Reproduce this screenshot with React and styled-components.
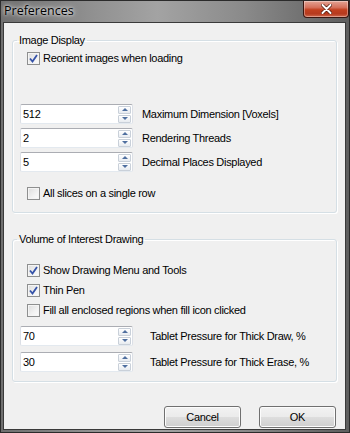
import styled, { createGlobalStyle } from "styled-components";

const GlobalStyle = createGlobalStyle`
    html, body {
        margin: 0;
        padding: 0;
        background: #ffffff;
    }
    * {
        box-sizing: border-box;
    }
`;

const CheckMark = () => (
    <svg width="9" height="9" viewBox="0 0 9 9">
        <path d="M1 4.5 L3.5 7.5 L8 1" fill="none" stroke="#3552a8" strokeWidth="1.8" />
    </svg>
);

const CloseGlyph = () => (
    <svg width="11" height="10" viewBox="0 0 11 10">
        <path d="M1.5 1 L9.5 9 M9.5 1 L1.5 9" stroke="#4a1408" strokeWidth="3.4" strokeLinecap="round" />
        <path d="M1.5 1 L9.5 9 M9.5 1 L1.5 9" stroke="#ffffff" strokeWidth="2" strokeLinecap="round" />
    </svg>
);

const Checkbox = ({ checked, label }) => (
    <CheckRow>
        <Box>{checked && <CheckMark />}</Box>
        <span>{label}</span>
    </CheckRow>
);

const SpinField = ({ value, label, wide }) => (
    <SpinRow wide={wide}>
        <Input>
            <span>{value}</span>
            <Spinner>
                <SpinButton>
                    <Arrow up />
                </SpinButton>
                <SpinButton>
                    <Arrow />
                </SpinButton>
            </Spinner>
        </Input>
        <span>{label}</span>
    </SpinRow>
);

const App = () => {
    return (
        <>
            <GlobalStyle />
            <Window>
                <TitleBar>
                    <Title>Preferences</Title>
                    <CloseButton>
                        <CloseGlyph />
                    </CloseButton>
                </TitleBar>
                <Client>
                    <Group>
                        <Legend>Image Display</Legend>
                        <Section top={4}>
                            <Checkbox checked label="Reorient images when loading" />
                        </Section>
                        <Section top={38} gap={4}>
                            <SpinField value="512" label="Maximum Dimension [Voxels]" />
                            <SpinField value="2" label="Rendering Threads" />
                            <SpinField value="5" label="Decimal Places Displayed" />
                        </Section>
                        <Section top={14} bottom={11}>
                            <Checkbox label="All slices on a single row" />
                        </Section>
                    </Group>
                    <Group second>
                        <Legend>Volume of Interest Drawing</Legend>
                        <Section top={17} gap={5}>
                            <Checkbox checked label="Show Drawing Menu and Tools" />
                            <Checkbox checked label="Thin Pen" />
                            <Checkbox label="Fill all enclosed regions when fill icon clicked" />
                        </Section>
                        <Section top={8} gap={6} bottom={9}>
                            <SpinField wide value="70" label="Tablet Pressure for Thick Draw, %" />
                            <SpinField wide value="30" label="Tablet Pressure for Thick Erase, %" />
                        </Section>
                    </Group>
                    <ButtonRow>
                        <Button>Cancel</Button>
                        <Button>OK</Button>
                    </ButtonRow>
                </Client>
            </Window>
        </>
    );
};

export default App;

const Window = styled.div`
    width: 350px;
    height: 433px;
    display: flex;
    flex-direction: column;
    border: 1px solid #2b2b2b;
    background: linear-gradient(90deg, #6f6f6f 0%, #8f8f8f 25%, #a3a3a3 45%, #8a8a8a 70%, #5e5e5e 100%);
    padding: 0 3px 2px 2px;
    font-family: "Liberation Sans", Arial, sans-serif;
    font-size: 11px;
    letter-spacing: -0.3px;
    color: #000;
`;

const TitleBar = styled.div`
    height: 21px;
    display: flex;
    align-items: flex-start;
    margin-right: -3px;
`;

const Title = styled.div`
    font-family: "Open Sans", "Liberation Sans", sans-serif;
    font-size: 12.5px;
    letter-spacing: 0;
    line-height: 16px;
    padding: 2px 0 0 1px;
    color: #000;
    text-shadow: 0 0 6px rgba(255, 255, 255, 0.9), 0 0 3px rgba(255, 255, 255, 0.9);
`;

const CloseButton = styled.div`
    margin-left: auto;
    width: 46px;
    height: 17px;
    display: flex;
    align-items: center;
    justify-content: center;
    border: 1px solid #3b1610;
    border-top: none;
    border-radius: 0 0 4px 4px;
    background: linear-gradient(180deg, #e3a394 0%, #d5715c 40%, #c2401f 55%, #b63a1e 80%, #d06a4e 100%);
    box-shadow: inset 0 0 0 1px rgba(255, 255, 255, 0.35);
`;

const Client = styled.div`
    flex: 1;
    display: flex;
    flex-direction: column;
    background: #f0f0f0;
    border: 1px solid #3a3a3a;
    padding: 11px 8px 0 8px;
`;

const Group = styled.fieldset`
    margin: ${({ second }) => (second ? "20px" : "0")} 0 0 0;
    padding: 0 7px;
    min-width: 0;
    border: 1px solid #d5dfe5;
    border-radius: 3px;
    box-shadow: inset 1px 1px 0 #fff, 1px 1px 0 #fff;
`;

const Legend = styled.legend`
    line-height: 13px;
    padding: 0 2px;
    margin-left: -3px;
`;

const Section = styled.div`
    display: flex;
    flex-direction: column;
    gap: ${({ gap }) => gap || 0}px;
    margin-top: ${({ top }) => top || 0}px;
    padding-bottom: ${({ bottom }) => bottom || 0}px;
`;

const CheckRow = styled.label`
    height: 15px;
    display: flex;
    align-items: center;
    gap: 3px;
    padding-left: 7px;
    line-height: 13px;
`;

const Box = styled.span`
    width: 13px;
    height: 13px;
    flex: none;
    display: flex;
    align-items: center;
    justify-content: center;
    border: 1px solid #8e8f8f;
    background: linear-gradient(135deg, #dcdcdc 0%, #f2f2f2 60%, #fcfcfc 100%);
    box-shadow: inset 0 0 0 1px #f4f4f4;
`;

const SpinRow = styled.div`
    height: 20px;
    display: flex;
    align-items: center;
    gap: ${({ wide }) => (wide ? 17 : 9)}px;
`;

const Input = styled.div`
    width: 113px;
    height: 20px;
    flex: none;
    display: flex;
    align-items: center;
    justify-content: space-between;
    background: #fff;
    border: 1px solid #dbdfe6;
    border-top-color: #abadb3;
    border-bottom-color: #e3e9ef;
    border-radius: 2px;
    padding: 0 1px 0 2px;
`;

const Spinner = styled.div`
    display: flex;
    flex-direction: column;
    gap: 1px;
`;

const SpinButton = styled.div`
    width: 13px;
    height: 8px;
    display: flex;
    align-items: center;
    justify-content: center;
    border: 1px solid #c9d0d9;
    border-radius: 1px;
    background: linear-gradient(180deg, #ffffff 0%, #e7ebf0 100%);
`;

const Arrow = styled.span`
    width: 0;
    height: 0;
    border-left: 3px solid transparent;
    border-right: 3px solid transparent;
    ${({ up }) => (up ? "border-bottom: 3px solid #4f6f9f;" : "border-top: 3px solid #4f6f9f;")}
`;

const ButtonRow = styled.div`
    display: flex;
    justify-content: flex-end;
    gap: 18px;
    margin-top: 24px;
    padding-right: 1px;
`;

const Button = styled.div`
    width: 77px;
    height: 22px;
    display: flex;
    align-items: center;
    justify-content: center;
    border: 1px solid #707070;
    border-radius: 3px;
    background: linear-gradient(180deg, #f2f2f2 0%, #ebebeb 48%, #dddddd 52%, #cfcfcf 100%);
    box-shadow: inset 0 0 0 1px #fcfcfc;
`;
